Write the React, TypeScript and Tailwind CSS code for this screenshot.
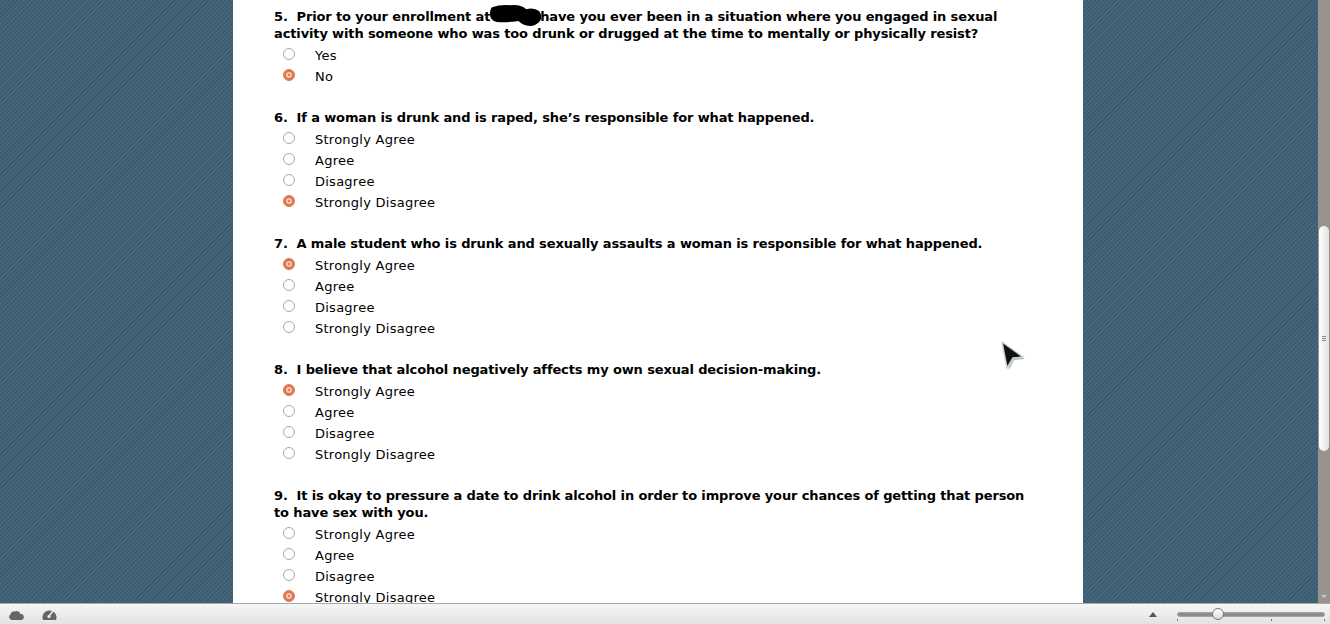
const questions = [
  {
    n: 5,
    text: (
      <>
        Prior to your enrollment at
        <span className="relative inline-block w-[50px] h-[10px]">
          <svg className="absolute left-[-1px] top-[-7px]" width="53" height="24" viewBox="0 0 54 24">
            <path
              d="M3 3 Q12 0 22 1 Q32 0 38 5 Q46 3 51 7 Q55 12 52 17 Q47 23 40 22 Q34 21 30 17 Q18 19 8 18 Q1 17 1 10 Q1 5 3 3Z"
              fill="#000"
            />
          </svg>
        </span>
        have you ever been in a situation where you engaged in sexual activity with someone who was too drunk or drugged at the time to mentally or physically resist?
      </>
    ),
    options: ['Yes', 'No'],
    picked: 1,
  },
  {
    n: 6,
    text: 'If a woman is drunk and is raped, she’s responsible for what happened.',
    options: ['Strongly Agree', 'Agree', 'Disagree', 'Strongly Disagree'],
    picked: 3,
  },
  {
    n: 7,
    text: 'A male student who is drunk and sexually assaults a woman is responsible for what happened.',
    options: ['Strongly Agree', 'Agree', 'Disagree', 'Strongly Disagree'],
    picked: 0,
  },
  {
    n: 8,
    text: 'I believe that alcohol negatively affects my own sexual decision-making.',
    options: ['Strongly Agree', 'Agree', 'Disagree', 'Strongly Disagree'],
    picked: 0,
  },
  {
    n: 9,
    text: 'It is okay to pressure a date to drink alcohol in order to improve your chances of getting that person to have sex with you.',
    options: ['Strongly Agree', 'Agree', 'Disagree', 'Strongly Disagree'],
    picked: 3,
  },
];

function Radio({ on }: { on: boolean }) {
  if (on) {
    return (
      <span className="block w-[12px] h-[12px] rounded-full bg-[#e2744a] border border-[#d9805c]">
        <span className="flex w-full h-full items-center justify-center">
          <span className="flex w-[6px] h-[6px] rounded-full bg-[#f7c9b4] items-center justify-center">
            <span className="block w-[2px] h-[2px] rounded-full bg-[#d9623a]" />
          </span>
        </span>
      </span>
    );
  }
  return <span className="block w-[12px] h-[12px] rounded-full bg-white border border-[#a8a8a8]" />;
}

export default function App() {
  return (
    <div className="h-[624px] w-[1330px] flex flex-col overflow-hidden font-['DejaVu_Sans',sans-serif] text-[13px] text-black">
      <div className="h-[603px] flex relative">
        <div className="flex-1 min-w-0 overflow-hidden pl-[233px] bg-[#3f5f74] bg-[repeating-linear-gradient(135deg,#3a5a6e_0px,#3a5a6e_1.5px,#47677c_1.5px,#47677c_3px)]">
          <div className="w-[850px] h-full bg-white pl-[41px] pt-[8px] overflow-hidden">
            {questions.map((q) => (
              <div key={q.n} className="mb-[22px] w-[760px]">
                <div className="font-bold leading-[17px] mb-[3px] tracking-[-0.13px]">
                  {q.n}.&nbsp; {q.text}
                </div>
                {q.options.map((opt, i) => (
                  <div key={opt} className="h-[21px] flex items-center pl-[9px]">
                    <span className="block shrink-0 -mt-[3px]">
                      <Radio on={i === q.picked} />
                    </span>
                    <span className="ml-[20px] tracking-[0.25px]">{opt}</span>
                  </div>
                ))}
              </div>
            ))}
          </div>
        </div>

        <div className="w-[12px] bg-[#98938d] flex flex-col items-center pt-[226px] relative">
          <div className="w-[10px] h-[225px] rounded-full bg-gradient-to-r from-[#fdfdfd] to-[#e2e2e2] flex flex-col items-center justify-center gap-[1px]">
            <span className="w-[4px] h-[1px] bg-[#8a8a8a]" />
            <span className="w-[4px] h-[1px] bg-[#8a8a8a]" />
            <span className="w-[4px] h-[1px] bg-[#8a8a8a]" />
          </div>
          <span className="absolute bottom-[5px] left-[3px] w-0 h-0 border-l-[3px] border-r-[3px] border-t-[3px] border-l-transparent border-r-transparent border-t-[#c9c6c2]" />
        </div>

        <svg className="absolute left-[998px] top-[338px]" width="30" height="34" viewBox="0 0 30 34">
          <path d="M4 4 L26 20 L15 21 L10 31 Z" fill="#000" opacity="0.25" transform="translate(1 1)" />
          <path d="M4 4 L25 19 L15 20 L9 30 Z" fill="#111" stroke="#c7d3da" strokeWidth="1.5" strokeLinejoin="round" />
        </svg>
      </div>

      <div className="h-[21px] border-t border-[#a9a9a9] bg-gradient-to-b from-[#f6f6f6] to-[#e3e3e3] flex items-center">
        <svg className="ml-[8px]" width="16" height="13" viewBox="0 0 16 13">
          <path
            d="M3.5 12 A3 3 0 0 1 2.5 6.5 A3.5 3.5 0 0 1 7 3.5 A4 4 0 0 1 12.5 6 A3 3 0 0 1 13 12 Z"
            fill="#666"
          />
        </svg>
        <svg className="ml-[18px]" width="15" height="14" viewBox="0 0 15 14">
          <path d="M1 13 A7 7 0 1 1 14 13 Z" fill="#666" />
          <path d="M7 9 L11 4" stroke="#eee" strokeWidth="1.5" />
          <circle cx="7" cy="9.5" r="1.6" fill="#eee" />
        </svg>
        <span className="ml-[1092px] w-0 h-0 border-l-[4px] border-r-[4px] border-b-[5px] border-l-transparent border-r-transparent border-b-[#555]" />
        <div className="ml-[20px] w-[148px] h-[16px] relative flex items-center">
          <div className="w-full h-[5px] rounded-full bg-[#8d8d8d] border border-[#a5a5a5]" />
          <div className="absolute left-[35px] top-[2px] w-[12px] h-[12px] rounded-full bg-gradient-to-b from-white to-[#dcdcdc] border border-[#777]" />
          <span className="absolute left-0 top-[13px] w-[1px] h-[2px] bg-[#777]" />
          <span className="absolute left-[94px] top-[13px] w-[1px] h-[2px] bg-[#777]" />
          <span className="absolute right-0 top-[13px] w-[1px] h-[2px] bg-[#777]" />
        </div>
      </div>
    </div>
  );
}
